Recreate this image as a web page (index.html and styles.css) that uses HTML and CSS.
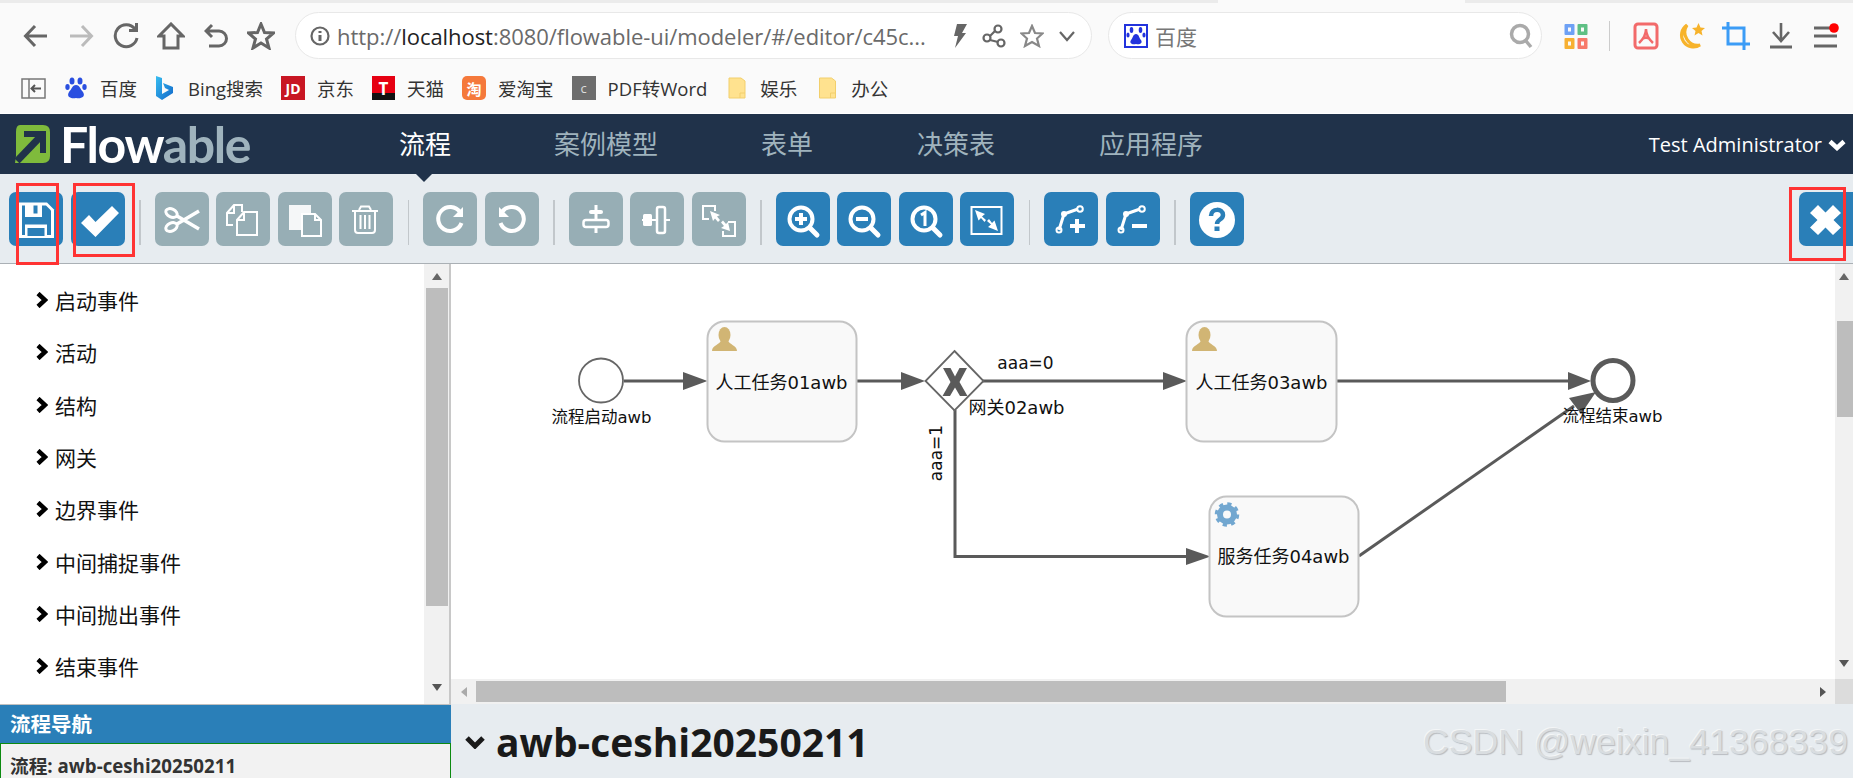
FILE: index.html
```html
<!DOCTYPE html>
<html lang="zh-CN">
<head>
<meta charset="utf-8">
<title>Flowable</title>
<link rel="stylesheet" href="styles.css">
</head>
<body>
<div class="page">
  <div class="chrome">
    <div class="tabstrip"><div class="tab"></div></div>
    <div class="navrow">
      <div class="navbtn"><svg width="26" height="26" viewBox="0 0 26 26"><path d="M24 13H3M12 3L2.500 13L12 23" class="ic"/></svg></div>
      <div class="navbtn"><svg width="26" height="26" viewBox="0 0 26 26"><path d="M2 13H23M14 3L23.500 13L14 23" class="ic ic-light"/></svg></div>
      <div class="navbtn"><svg width="26" height="28" viewBox="0 0 26 28"><path d="M22 7A11 11 0 1 0 24 16" class="ic"/><path d="M23.500 1V8.500H16" class="ic"/></svg></div>
      <div class="navbtn"><svg width="28" height="28" viewBox="0 0 28 28"><path d="M2 14L14 2L26 14H21V26H7V14Z" class="ic"/></svg></div>
      <div class="navbtn"><svg width="24" height="26" viewBox="0 0 24 26"><path d="M8 2L2 8L8 14M3 8H15A7.500 7.500 0 0 1 15 23H5" class="ic"/></svg></div>
      <div class="navbtn"><svg width="28" height="28" viewBox="0 0 28 28"><path d="M14 2L17.500 10.500L26.500 11L19.500 17L22 26L14 21L6 26L8.500 17L1.500 11L10.500 10.500Z" class="ic"/></svg></div>
      <div class="urlbar">
        <svg class="info" width="20" height="20" viewBox="0 0 20 20"><circle cx="10" cy="10" r="8.500" class="ic ic-thin"/><path d="M10 9V15M10 5V7" class="ic"/></svg>
        <span class="url">http://<b>localhost</b>:8080/flowable-ui/modeler/#/editor/c45c...</span>
        <svg class="url-bolt" width="16" height="26" viewBox="0 0 16 26"><path d="M5 1H15L10 10H14L3 25L6 13H2Z" fill="#666"/></svg>
        <svg class="url-share" width="24" height="24" viewBox="0 0 24 24"><circle cx="16" cy="5" r="3.500" class="ic ic-thin"/><circle cx="5" cy="14" r="3.500" class="ic ic-thin"/><circle cx="19" cy="19" r="3.500" class="ic ic-thin"/><path d="M13 7L8 12M8 16L16 18" class="ic ic-thin"/></svg>
        <svg class="url-star" width="24" height="24" viewBox="0 0 24 24"><path d="M12 2L15 9L22.500 9.500L17 14.500L19 22L12 18L5 22L7 14.500L1.500 9.500L9 9Z" class="ic ic-star"/></svg>
        <svg class="url-chev" width="16" height="12" viewBox="0 0 16 12"><path d="M1 2L8 10L15 2" class="ic ic-thin"/></svg>
      </div>
      <div class="searchbar">
        <div class="paw-box"><svg width="20" height="22" viewBox="0 0 20 22"><ellipse cx="5.500" cy="5" rx="1.800" ry="3" fill="#2233dd"/><ellipse cx="14.500" cy="5" rx="1.800" ry="3" fill="#2233dd"/><ellipse cx="2" cy="10" rx="1.600" ry="2.500" fill="#2233dd"/><ellipse cx="18" cy="10" rx="1.600" ry="2.500" fill="#2233dd"/><path d="M10 9C13 9 13 13 15 15C17 18 14 20 10 19C6 20 3 18 5 15C7 13 7 9 10 9Z" fill="#2233dd"/></svg></div>
        <span class="search-text">百度</span>
        <svg class="search-glass" width="24" height="26" viewBox="0 0 24 26"><circle cx="11" cy="11" r="8.500" fill="none" stroke="#aaa" stroke-width="3.500"/><path d="M17 18L22 24" stroke="#aaa" stroke-width="3.500"/></svg>
      </div>
      <div class="navbtn navbtn-first"><svg width="26" height="26" viewBox="0 0 26 26"><rect x="1.500" y="1" width="10" height="11" rx="1" fill="#6ea1f5"/><rect x="14.500" y="1" width="10" height="11" rx="1" fill="#5fc084"/><rect x="1.500" y="15" width="10" height="11" rx="1" fill="#f7b032"/><rect x="14.500" y="15" width="10" height="11" rx="1" fill="#f77a6a"/><rect x="5" y="4.500" width="3" height="4" fill="#fafafa"/><rect x="18" y="4.500" width="3" height="4" fill="#fafafa"/><rect x="5" y="18.500" width="3" height="4" fill="#fafafa"/><rect x="18" y="18.500" width="3" height="4" fill="#fafafa"/></svg></div>
      <div class="navsep"></div>
      <div class="navbtn"><svg width="26" height="28" viewBox="0 0 26 28"><rect x="2" y="2" width="22" height="24" rx="3" fill="none" stroke="#f26a6a" stroke-width="3"/><path d="M13 7C13 12 11.500 16 6 21M13 7C13 12 14.500 16 20 21M9 17C12 15 14 15 17 17" fill="none" stroke="#f26a6a" stroke-width="2.500"/></svg></div>
      <div class="navbtn"><svg width="28" height="28" viewBox="0 0 28 28"><path d="M10 3A11.500 11.500 0 1 0 23 23A13 13 0 0 1 10 3Z" fill="none" stroke="#f7b32b" stroke-width="3.200"/><path d="M21.500 1L23.500 5.500L28 6L24.500 9L25.500 13.500L21.500 11L17.500 13.500L18.500 9L15 6L19.500 5.500Z" fill="#f7b32b"/></svg></div>
      <div class="navbtn"><svg width="28" height="28" viewBox="0 0 28 28"><path d="M6 0V22H28M0 6H22V28" fill="none" stroke="#3b9cf6" stroke-width="3"/></svg></div>
      <div class="navbtn"><svg width="24" height="27" viewBox="0 0 24 27"><path d="M12 1V18M4 10L12 19L20 10" class="ic ic-dl"/><path d="M1 25H23" fill="none" stroke="#666" stroke-width="3"/></svg></div>
      <div class="navbtn"><svg width="26" height="26" viewBox="0 0 26 26"><path d="M1 5H20M1 13H24M1 23H24" fill="none" stroke="#666" stroke-width="3"/><circle cx="21" cy="5" r="4.800" fill="#f00"/></svg></div>
    </div>
    <div class="bookmarks">
      <svg class="bm-side" width="25" height="21" viewBox="0 0 25 21"><rect x="1" y="1" width="23" height="19" fill="none" stroke="#777" stroke-width="1.500"/><path d="M8 1V20" stroke="#777" stroke-width="1.500"/><path d="M20 10.500H11M14 7L10.500 10.500L14 14" fill="none" stroke="#555" stroke-width="2"/></svg>
      <div class="bm"><svg width="24" height="24" viewBox="0 0 24 24"><ellipse cx="8" cy="5" rx="2.500" ry="3.500" fill="#2a4fe0"/><ellipse cx="16" cy="5" rx="2.500" ry="3.500" fill="#2a4fe0"/><ellipse cx="3.500" cy="11" rx="2.200" ry="3" fill="#2a4fe0"/><ellipse cx="20.500" cy="11" rx="2.200" ry="3" fill="#2a4fe0"/><path d="M12 9C16 9 16 13 19 16C22 21 17 23 12 22C7 23 2 21 5 16C8 13 8 9 12 9Z" fill="#2a4fe0"/></svg><span>百度</span></div>
      <div class="bm bm-tight"><svg width="19" height="26" viewBox="0 0 19 26"><defs><linearGradient id="bing" x1="0" y1="0" x2="1" y2="1"><stop offset="0" stop-color="#37bdf0"/><stop offset="1" stop-color="#1167c9"/></linearGradient></defs><path d="M1 1L7 3V19L14 15L10 13L8 8L18 12V18L7 25L1 21Z" fill="url(#bing)"/></svg><span>Bing搜索</span></div>
      <div class="bm"><span class="ico ico-jd">JD</span><span>京东</span></div>
      <div class="bm"><span class="ico ico-t">T</span><span>天猫</span></div>
      <div class="bm"><span class="ico ico-tao">淘</span><span>爱淘宝</span></div>
      <div class="bm"><span class="ico ico-c">c</span><span>PDF转Word</span></div>
      <div class="bm bm-wide"><svg width="18" height="22" viewBox="0 0 18 22"><path d="M1 1H13L17 4V21H1Z" fill="#ffe28f" stroke="#f2cf6c"/><path d="M12 21V16H17" fill="none" stroke="#f2cf6c"/></svg><span>娱乐</span></div>
      <div class="bm bm-wide"><svg width="19" height="22" viewBox="0 0 18 22"><path d="M1 1H13L17 4V21H1Z" fill="#ffe28f" stroke="#f2cf6c"/><path d="M12 21V16H17" fill="none" stroke="#f2cf6c"/></svg><span>办公</span></div>
    </div>
  </div>

  <header class="topbar">
    <svg class="logo-mark" width="38" height="38" viewBox="0 0 38 38"><path d="M8 0H31Q38 0 38 7V31Q38 38 31 38H3L4 31V7Q4 0 8 0Z" fill="#7fbb3c"/><path d="M5 36L29 11" fill="none" stroke="#20324a" stroke-width="7"/><path d="M12 9H31V28" fill="none" stroke="#20324a" stroke-width="6"/></svg>
    <div class="logo-text">Flow<span>able</span></div>
    <nav class="mainnav">
      <a class="active">流程</a>
      <a class="nav-case">案例模型</a>
      <a class="nav-form">表单</a>
      <a class="nav-dec">决策表</a>
      <a class="nav-app">应用程序</a>
    </nav>
    <div class="user">Test Administrator
      <svg width="18" height="13" viewBox="0 0 18 13"><path d="M2 3.500L9 10L16 3.500" fill="none" stroke="#fff" stroke-width="4.500"/></svg>
    </div>
  </header>
  <div class="toolbar">
    <div class="group">
      <div class="btn"><svg viewBox="0 0 54 54"><path d="M10 10.500H38L45 17.500V46H10Z" fill="#fff"/><path d="M13 13.500H37L42 18.500V43H13Z" fill="#2a7fb8"/><rect x="16" y="11" width="17" height="14" fill="#fff"/><rect x="24.500" y="13.500" width="4" height="8" fill="#2a7fb8"/><rect x="16" y="32.500" width="22" height="12" fill="#fff"/><rect x="18.500" y="36" width="17" height="8" fill="#2a7fb8"/></svg></div>
      <div class="btn"><svg viewBox="0 0 54 54"><path d="M10 31L18 23L24.500 30L41 14L48 21L24.500 45Z" fill="#fff"/></svg></div>
    </div>
    <div class="sep"></div>
    <div class="group">
      <div class="btn off"><svg viewBox="0 0 54 54"><ellipse cx="16.500" cy="21" rx="6" ry="4" transform="rotate(25 16.500 21)" class="wl wl3"/><ellipse cx="16.500" cy="35" rx="6" ry="4" transform="rotate(-25 16.500 35)" class="wl wl3"/><path d="M22 24L44 37M22 32L44 19" class="wl wl35"/></svg></div>
      <div class="btn off"><svg viewBox="0 0 54 54"><path d="M17 33H11V21L18 13H26V20M18 13V21H11" class="wl wl2"/><path d="M21 28L28 20H41V43H21ZM28 20V28H21" class="wl wl2"/></svg></div>
      <div class="btn off"><svg viewBox="0 0 54 54"><path d="M11 13H33V22H24V38H11Z" fill="#f5f7f8"/><path d="M24 22H37L43 28V44H24Z" fill="#97aeb5" stroke="#fff" stroke-width="2"/><path d="M37 22V28H43" class="wl wl2"/></svg></div>
      <div class="btn off"><svg viewBox="0 0 54 54"><path d="M13 19H39M20 18L22 14.500H30L32 18" class="wl wl2"/><path d="M16 20V38Q16 41 19 41H33Q36 41 36 38V20" class="wl wl2"/><path d="M21.500 23V37M26 23V37M30.500 23V37" class="wl wl2"/></svg></div>
    </div>
    <div class="sep"></div>
    <div class="group">
      <div class="btn off"><svg viewBox="0 0 54 54"><path d="M37 20A12 12 0 1 0 38.500 31" class="wl wl4"/><path d="M40 15V25H30Z" fill="#fff"/></svg></div>
      <div class="btn off"><svg viewBox="0 0 54 54"><path d="M17 20A12 12 0 1 1 15.500 31" class="wl wl4"/><path d="M14 15V25H24Z" fill="#fff"/></svg></div>
    </div>
    <div class="sep"></div>
    <div class="group">
      <div class="btn off"><svg viewBox="0 0 54 54"><path d="M27 13V41" class="wl wl3"/><rect x="20" y="18" width="14" height="4" rx="2" fill="#fff"/><rect x="14.500" y="28" width="25" height="7" rx="2.500" fill="#97aeb5" stroke="#fff" stroke-width="2.500"/></svg></div>
      <div class="btn off"><svg viewBox="0 0 54 54"><path d="M12 28H40" class="wl wl2"/><rect x="13" y="22" width="9" height="12" rx="1.500" fill="#fff"/><rect x="27" y="15" width="8" height="26" rx="2" fill="#97aeb5" stroke="#fff" stroke-width="2.500"/></svg></div>
      <div class="btn off"><svg viewBox="0 0 54 54"><path d="M17 27H11V14H23V19" class="wl wl2"/><path d="M36 30H43V44H31V39" class="wl wl2"/><path d="M18 19L28 23L25 24.500L28 28L26 30L23 26.500L21 29ZM38 39L29 36L32 34L29 30.500L31 28.500L34 32L36 30Z" fill="#fff"/></svg></div>
    </div>
    <div class="sep"></div>
    <div class="group">
      <div class="btn"><svg viewBox="0 0 54 54"><circle cx="25" cy="27" r="11.500" class="wl wl4"/><path d="M34 36L41 43" class="wl wl5"/><path d="M25 21V33M19 27H31" class="wl wl4"/></svg></div>
      <div class="btn"><svg viewBox="0 0 54 54"><circle cx="25" cy="27" r="11.500" class="wl wl4"/><path d="M34 36L41 43" class="wl wl5"/><path d="M19 27H31" class="wl wl4"/></svg></div>
      <div class="btn"><svg viewBox="0 0 54 54"><circle cx="25" cy="27" r="11.500" class="wl wl4"/><path d="M34 36L41 43" class="wl wl5"/><path d="M22 23L26 20.500V34" class="wl wl3"/></svg></div>
      <div class="btn"><svg viewBox="0 0 54 54"><rect x="11.500" y="15" width="30" height="27" class="wl wl2"/><path d="M15 18L25 22L22 24.500L26 28L24.500 30L21 26L18.500 28.500ZM38 39L28 35L31 32.500L27 29L29 27L32 31L34.500 28.500Z" fill="#fff"/></svg></div>
    </div>
    <div class="sep"></div>
    <div class="group">
      <div class="btn"><svg viewBox="0 0 54 54"><path d="M15 38L20 22L34 17" class="wl wl3"/><circle cx="15" cy="38" r="2.500" class="wl wl2"/><circle cx="20" cy="22" r="3" fill="#fff"/><circle cx="36" cy="17" r="2.800" class="wl wl2"/><path d="M33 27V41M26 34H41" class="wl wl4"/></svg></div>
      <div class="btn"><svg viewBox="0 0 54 54"><path d="M15 38L20 22L34 17" class="wl wl3"/><circle cx="15" cy="38" r="2.500" class="wl wl2"/><circle cx="20" cy="22" r="3" fill="#fff"/><circle cx="36" cy="17" r="2.800" class="wl wl2"/><path d="M26 34H41" class="wl wl4"/></svg></div>
    </div>
    <div class="sep"></div>
    <div class="group">
      <div class="btn"><svg viewBox="0 0 54 54"><circle cx="27" cy="28" r="18" fill="#fff"/><path d="M21 24C21 16 33 16 33 23C33 28 27 27 27 32" fill="none" stroke="#2a7fb8" stroke-width="4.500"/><rect x="24.500" y="34.500" width="5" height="4.500" fill="#2a7fb8"/></svg></div>
    </div>
    <div class="btn btn-close"><svg viewBox="0 0 54 54"><path d="M19 13L26.500 20.500L34 13L42 21L34.500 28L42 35.500L34 43L26.500 35.500L19 43L11 35.500L18.500 28L11 21Z" fill="#fff"/></svg></div>
  </div>

  <div class="workspace">
    <aside class="sidebar">
      <div class="palette">
        <ul class="palette-list">
          <li><svg width="13" height="16" viewBox="0 0 13 16"><path d="M3 1.500L10 8L3 14.500" class="chev"/></svg>启动事件</li>
          <li><svg width="13" height="16" viewBox="0 0 13 16"><path d="M3 1.500L10 8L3 14.500" class="chev"/></svg>活动</li>
          <li><svg width="13" height="16" viewBox="0 0 13 16"><path d="M3 1.500L10 8L3 14.500" class="chev"/></svg>结构</li>
          <li><svg width="13" height="16" viewBox="0 0 13 16"><path d="M3 1.500L10 8L3 14.500" class="chev"/></svg>网关</li>
          <li><svg width="13" height="16" viewBox="0 0 13 16"><path d="M3 1.500L10 8L3 14.500" class="chev"/></svg>边界事件</li>
          <li><svg width="13" height="16" viewBox="0 0 13 16"><path d="M3 1.500L10 8L3 14.500" class="chev"/></svg>中间捕捉事件</li>
          <li><svg width="13" height="16" viewBox="0 0 13 16"><path d="M3 1.500L10 8L3 14.500" class="chev"/></svg>中间抛出事件</li>
          <li><svg width="13" height="16" viewBox="0 0 13 16"><path d="M3 1.500L10 8L3 14.500" class="chev"/></svg>结束事件</li>
        </ul>
        <div class="vscroll vscroll-side">
          <span class="tri tri-up"></span>
          <div class="vthumb"></div>
          <span class="tri tri-down"></span>
        </div>
      </div>
      <div class="navpanel-head">流程导航</div>
      <div class="navpanel-body">流程: awb-ceshi20250211</div>
    </aside>
    <main class="stage">
      <div class="canvas-row">
        <svg class="diagram" width="1384" height="415" viewBox="451 264 1384 415">
          <g class="flow">
            <path d="M624 381H684"/>
            <path d="M857 381H902"/>
            <path d="M983 381H1164"/>
            <path d="M1337 381H1569"/>
            <path d="M955 410V556.500H1187"/>
            <path d="M1359 556L1574 406"/>
          </g>
          <g class="head">
            <path d="M683 372L707.500 381L683 390Z"/>
            <path d="M901 372L925 381L901 390Z"/>
            <path d="M1163 372L1187 381L1163 390Z"/>
            <path d="M1568 372L1591 381L1568 390Z"/>
            <path d="M1186 548L1210.500 556.500L1186 565Z"/>
            <path d="M1596 392L1581 414L1569 398Z"/>
          </g>
          <circle cx="601" cy="380.500" r="22" class="start"/>
          <circle cx="1613" cy="380.500" r="20" class="end"/>
          <rect x="707.500" y="321.500" width="149" height="120" rx="17" class="task"/>
          <rect x="1186.500" y="321.500" width="150" height="120" rx="17" class="task"/>
          <rect x="1209.500" y="496.500" width="149" height="120" rx="17" class="task"/>
          <path d="M954.500 351L983.500 381L954.500 410.500L925.500 381Z" class="gate"/>
          <path d="M943 368H950.500L955 376.500L959.500 368H967L959.500 382L967.500 396H960L955 387.500L950 396H942.500L950.500 382Z" class="head"/>
          <g class="person">
            <ellipse cx="724.500" cy="335" rx="6" ry="8"/>
            <path d="M712 351C712 345 720 345 721 340H728C729 345 737 345 737 351Z"/>
          </g>
          <g class="person" transform="translate(480 0)">
            <ellipse cx="724.500" cy="335" rx="6" ry="8"/>
            <path d="M712 351C712 345 720 345 721 340H728C729 345 737 345 737 351Z"/>
          </g>
          <g class="gear">
            <circle cx="1227" cy="514.500" r="7" class="gear-ring"/>
            <circle cx="1227" cy="514.500" r="10.500" class="gear-teeth"/>
          </g>
          <text x="781.500" y="389" class="dt">人工任务01awb</text>
          <text x="1261.500" y="389" class="dt">人工任务03awb</text>
          <text x="1283.500" y="563" class="dt">服务任务04awb</text>
          <text x="601.500" y="423" class="dt dt-sm">流程启动awb</text>
          <text x="1612.500" y="422" class="dt dt-sm">流程结束awb</text>
          <text x="1016.500" y="414" class="dt">网关02awb</text>
          <text x="1025.500" y="369" class="dt dt-lb">aaa=0</text>
          <text x="0" y="0" class="dt dt-lb" transform="translate(942 453) rotate(-90)">aaa=1</text>
        </svg>
        <div class="vscroll vscroll-canvas">
          <span class="tri tri-up"></span>
          <div class="vthumb"></div>
          <span class="tri tri-down"></span>
        </div>
      </div>
      <div class="hscroll">
        <span class="tri tri-left"></span>
        <div class="hthumb"></div>
        <span class="tri tri-right"></span>
        <div class="corner"></div>
      </div>
      <div class="titlebar">
        <svg width="22" height="14" viewBox="0 0 22 14"><path d="M3 3L11 11L19 3" fill="none" stroke="#1a1a1a" stroke-width="5"/></svg>
        <h1>awb-ceshi20250211</h1>
      </div>
    </main>
  </div>
  <div class="mark mark-save"></div>
  <div class="mark mark-check"></div>
  <div class="mark mark-close"></div>
  <div class="watermark">CSDN @weixin_41368339</div>
</div>
</body>
</html>
```
FILE: styles.css
```css
* { box-sizing: border-box; }
html, body { margin: 0; padding: 0; }
body {
  width: 1853px;
  height: 778px;
  overflow: hidden;
  background: #fff;
  font-family: "Open Sans", "Noto Sans CJK SC", sans-serif;
}
.page { position: relative; width: 1853px; height: 778px; overflow: hidden; }

/* browser chrome */
.chrome { height: 114px; background: #fafafa; border-bottom: 1px solid #fff; }
.tabstrip { height: 3px; background: #ebebeb; }
.tab { width: 247px; height: 3px; margin-left: 1218px; background: #fafafa; }
.navrow { display: flex; align-items: center; height: 47px; margin-top: 9px; padding-left: 13px; }
.navbtn { flex: 0 0 45px; display: flex; align-items: center; justify-content: center; }
.ic { fill: none; stroke: #666; stroke-width: 3; }
.ic-light { stroke: #bbb; }
.ic-thin { stroke-width: 2.200; }
.ic-star { stroke-width: 2.200; stroke: #888; }
.ic-dl { stroke-width: 2.600; }
.urlbar {
  display: flex; align-items: center;
  width: 797px; height: 47px; margin-left: 12px;
  background: #fff; border: 1px solid #e8e8e8; border-radius: 24px;
  padding-left: 14px;
}
.url { margin-left: 7px; width: 615px; font-family: "Open Sans", sans-serif; font-size: 22px; letter-spacing: -0.050px; color: #6a6a6a; white-space: nowrap; }
.url b { font-weight: 400; color: #222; }
.url-share { margin-left: 14px; }
.url-star { margin-left: 14px; }
.url-chev { margin-left: 15px; }
.searchbar {
  display: flex; align-items: center;
  width: 434px; height: 47px; margin-left: 16px;
  background: #fff; border: 1px solid #e8e8e8; border-radius: 24px;
  padding-left: 15px;
}
.paw-box { width: 24px; height: 24px; border: 2px solid #2233dd; display: flex; align-items: center; justify-content: center; background: #fff; }
.search-text { margin-left: 7px; width: 354px; font-family: "Noto Sans CJK SC", sans-serif; font-size: 21px; color: #777; }
.navbtn-first { margin-left: 11px; }
.navsep { width: 1px; height: 30px; background: #ccc; margin: 0 13px 0 11px; }
.bookmarks { display: flex; align-items: center; gap: 18px; height: 36px; margin-top: 11px; padding-left: 21px; font-size: 18.500px; color: #333; }
.bm-side { margin-right: 0; }
.bm { display: flex; align-items: center; gap: 12px; white-space: nowrap; }
.bm-tight { gap: 14px; }
.bm-wide { gap: 14px; margin-left: 3px; }
.ico { display: flex; align-items: center; justify-content: center; flex: none; width: 24px; height: 24px; color: #fff; font-size: 13px; font-weight: 700; }
.ico-jd { background: #c81623; font-size: 14px; }
.ico-t { width: 23px; background: linear-gradient(#e60012 70%, #111 70%); font-size: 17px; }
.ico-tao { background: #f5793b; border-radius: 5px; font-size: 15px; }
.ico-c { background: #6d6d6d; color: #ddd; font-weight: 400; font-size: 13px; }

/* app header */
.topbar { position: relative; display: flex; align-items: center; height: 60px; background: #20324a; padding-left: 12px; }
.logo-mark { flex: none; }
.logo-text { margin-left: 10px; font-family: "Lato", sans-serif; font-weight: 700; font-size: 50px; line-height: 60px; color: #fff; letter-spacing: -1.400px; }
.logo-text span { color: #9fb3bd; }
.mainnav { position: absolute; left: 399px; top: -2px; display: flex; height: 60px; align-items: center; font-family: "Noto Sans CJK SC", sans-serif; font-size: 26px; color: #9fb3bd; }
.mainnav a { display: block; }
.mainnav .active { color: #fff; position: relative; }
.mainnav .active::after { content: ""; position: absolute; left: 16px; top: 49px; border: 9px solid transparent; border-top-color: #20324a; border-bottom: 0; }
.nav-case { margin-left: 103px; }
.nav-form { margin-left: 103px; }
.nav-dec { margin-left: 104px; }
.nav-app { margin-left: 104px; }
.user { position: absolute; right: 7px; top: 0; height: 60px; display: flex; align-items: center; gap: 6px; color: #fff; font-size: 20px; }

/* toolbar */
.toolbar { display: flex; align-items: flex-start; height: 90px; padding: 18px 0 0 9px; background: #e7ecf0; border-bottom: 1px solid #aab0b5; }
.group { display: flex; gap: 7.500px; }
.btn { width: 54px; height: 54px; background: #2a7fb8; border-radius: 7px; }
.btn svg { display: block; width: 54px; height: 54px; }
.btn.off { background: #97aeb5; }
.btn-close { margin-left: auto; border-radius: 7px 0 0 7px; }
.sep { width: 1.500px; height: 45px; margin: 8px 14px 0 14.500px; background: #c2c7cb; }
.wl { fill: none; stroke: #fff; stroke-width: 2.500; }
.wl2 { stroke-width: 2; }
.wl3 { stroke-width: 3; }
.wl35 { stroke-width: 3.500; }
.wl4 { stroke-width: 4; }
.wl5 { stroke-width: 5; stroke-linecap: round; }

/* workspace */
.workspace { display: flex; height: 514px; }
.sidebar { display: flex; flex-direction: column; flex: none; width: 451px; }
.palette { display: flex; height: 441px; border-right: 2px solid #c8c8c8; border-bottom: 1px solid #c0c0c0; }
.palette-list { flex: 1; margin: 0; padding: 10px 0 0 35px; list-style: none; font-family: "Noto Sans CJK SC", sans-serif; font-size: 21px; color: #111; }
.palette-list li { display: flex; align-items: center; gap: 7px; height: 52.300px; }
.chev { fill: none; stroke: #000; stroke-width: 4.500; }
.vscroll { display: flex; flex-direction: column; align-items: center; flex: none; background: #f1f1f1; }
.vscroll-side { width: 25px; }
.vscroll-side .vthumb { width: 22px; height: 318px; margin-top: 8px; background: #bdbdbd; }
.vscroll-side .tri-down { margin-top: 78px; }
.vscroll-canvas { width: 18px; height: 415px; }
.vscroll-canvas .vthumb { width: 16px; height: 96px; margin-top: 41px; margin-left: 2px; background: #bdbdbd; }
.vscroll-canvas .tri-down { margin-top: 243px; }
.tri { display: block; flex: none; width: 0; height: 0; border: 5px solid transparent; }
.tri-up { margin-top: 9px; border-top: 0; border-bottom: 7px solid #666; }
.tri-down { border-bottom: 0; border-top: 7px solid #555; }
.tri-left { margin-left: 10px; border-left: 0; border-right: 6px solid #aaa; }
.tri-right { margin-left: 314px; border-right: 0; border-left: 6px solid #555; }
.navpanel-head { flex: none; height: 38px; line-height: 36px; padding-left: 10px; background: #2a7fb8; color: #fff; font-size: 20.500px; font-weight: 700; font-family: "Noto Sans CJK SC", sans-serif; }
.navpanel-body { flex: 1; padding: 7px 0 0 9px; background: #f2f2f2; border: 1px solid #0c8a10; border-bottom: 0; font-size: 18.700px; font-weight: 700; color: #333; white-space: nowrap; }

.stage { display: flex; flex-direction: column; flex: 1; min-width: 0; }
.canvas-row { display: flex; height: 415px; background: #fff; }
.diagram { display: block; flex: none; }
.flow path { fill: none; stroke: #5a5a5a; stroke-width: 3; }
.head, .head path { fill: #5a5a5a; }
.start { fill: #fff; stroke: #666; stroke-width: 1.800; }
.end { fill: #fff; stroke: #5a5a5a; stroke-width: 5; }
.task { fill: #f9f9f9; stroke: #c4c4c4; stroke-width: 2; }
.gate { fill: #fff; stroke: #666; stroke-width: 1.800; }
.person { fill: #d1b574; }
.gear-ring { fill: none; stroke: #72a7d0; stroke-width: 6; }
.gear-teeth { fill: none; stroke: #72a7d0; stroke-width: 3.500; stroke-dasharray: 4.120 4.120; }
.dt { font-family: "DejaVu Sans", "Noto Sans CJK SC", sans-serif; font-size: 18px; fill: #111; text-anchor: middle; }
.dt-sm { font-size: 16.500px; }
.dt-lb { font-size: 17px; }

.hscroll { display: flex; align-items: center; height: 25px; background: #f1f1f1; }
.hthumb { width: 1030px; height: 21px; margin-left: 9px; background: #bdbdbd; }
.corner { align-self: stretch; width: 18px; margin-left: 9px; background: #dcdcdc; }
.titlebar { display: flex; align-items: center; flex: 1; gap: 10px; padding: 2px 0 0 13px; background: #e7ecf0; }
.titlebar h1 { margin: 0; font-size: 39px; font-weight: 700; color: #1a1a1a; line-height: 72px; }

/* overlays */
.mark { position: absolute; border: 3px solid #f33; }
.mark-save { left: 16px; top: 183px; width: 43px; height: 82px; }
.mark-check { left: 73px; top: 183px; width: 62px; height: 74px; }
.mark-close { left: 1789px; top: 187px; width: 57px; height: 74px; }
.watermark {
  position: absolute; left: 1423px; top: 722px;
  font-family: "Liberation Sans", sans-serif; font-size: 35.700px; line-height: 40px;
  color: #d9dde0; white-space: nowrap;
  text-shadow: 1px 1px 1px #b8bcc0, -1px -1px 0 #f4f6f7;
}
```
